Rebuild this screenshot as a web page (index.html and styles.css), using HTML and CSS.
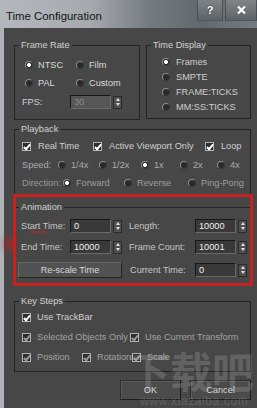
FILE: index.html
```html
<!DOCTYPE html>
<html lang="en">
    <head>
        <meta charset="UTF-8" />
        <meta name="viewport" content="width=device-width, initial-scale=1.0" />
        <title>Time Configuration</title>
        <link rel="stylesheet" href="styles.css">
    </head>
    <body>
        <div class="window">
            <div class="titlebar">
                <span class="title">Time Configuration</span>
                <div class="caption-btn help">?</div>
                <div class="caption-btn close">
                    <svg width="11" height="10" viewBox="0 0 11 10"><path d="M2 1.5 9 8.5M9 1.5 2 8.5" /></svg>
                </div>
            </div>

            <div class="client">
                <div class="top-row">
                    <fieldset class="group frame-rate">
                        <legend>Frame Rate</legend>
                        <div class="fr-body">
                            <div class="radio-grid">
                                <label class="opt"><i class="radio on"></i>NTSC</label>
                                <label class="opt"><i class="radio"></i>Film</label>
                                <label class="opt"><i class="radio"></i>PAL</label>
                                <label class="opt"><i class="radio"></i>Custom</label>
                            </div>
                            <div class="fps">
                                <span class="fps-lbl">FPS:</span>
                                <span class="spinner off"><span class="input">30</span><span class="spin"></span></span>
                            </div>
                        </div>
                    </fieldset>

                    <fieldset class="group time-display">
                        <legend>Time Display</legend>
                        <div class="td-body">
                            <label class="opt"><i class="radio on"></i>Frames</label>
                            <label class="opt"><i class="radio"></i>SMPTE</label>
                            <label class="opt"><i class="radio"></i>FRAME:TICKS</label>
                            <label class="opt"><i class="radio"></i>MM:SS:TICKS</label>
                        </div>
                    </fieldset>
                </div>

                <fieldset class="group playback">
                    <legend>Playback</legend>
                    <div class="pb-body">
                        <div class="pb-checks">
                            <label class="opt"><i class="chk"></i>Real Time</label>
                            <label class="opt"><i class="chk"></i>Active Viewport Only</label>
                            <label class="opt"><i class="chk"></i>Loop</label>
                        </div>
                        <div class="pb-speed">
                            <span>Speed:</span>
                            <label class="opt"><i class="radio"></i>1/4x</label>
                            <label class="opt"><i class="radio"></i>1/2x</label>
                            <label class="opt"><i class="radio on"></i>1x</label>
                            <label class="opt"><i class="radio"></i>2x</label>
                            <label class="opt"><i class="radio"></i>4x</label>
                        </div>
                        <div class="pb-dir">
                            <span>Direction:</span>
                            <label class="opt"><i class="radio on"></i>Forward</label>
                            <label class="opt"><i class="radio"></i>Reverse</label>
                            <label class="opt"><i class="radio"></i>Ping-Pong</label>
                        </div>
                    </div>
                </fieldset>

                <div class="highlight">
                    <fieldset class="group animation">
                        <legend>Animation</legend>
                        <div class="an-body">
                            <div class="an-row">
                                <span>Start Time:</span>
                                <span class="spinner"><span class="input">0</span><span class="spin"></span></span>
                                <span>Length:</span>
                                <span class="spinner"><span class="input">10000</span><span class="spin"></span></span>
                            </div>
                            <div class="an-row">
                                <span>End Time:</span>
                                <span class="spinner"><span class="input">10000</span><span class="spin"></span></span>
                                <span>Frame Count:</span>
                                <span class="spinner"><span class="input">10001</span><span class="spin"></span></span>
                            </div>
                            <div class="an-last">
                                <div class="btn rescale">Re-scale Time</div>
                                <span class="cur-lbl">Current Time:</span>
                                <span class="spinner"><span class="input">0</span><span class="spin"></span></span>
                            </div>
                        </div>
                    </fieldset>
                </div>

                <fieldset class="group key-steps">
                    <legend>Key Steps</legend>
                    <div class="ks-body">
                        <div class="ks-row">
                            <label class="opt"><i class="chk"></i>Use TrackBar</label>
                        </div>
                        <div class="ks-row dim sel">
                            <label class="opt"><i class="chk"></i>Selected Objects Only</label>
                            <label class="opt"><i class="chk"></i>Use Current Transform</label>
                        </div>
                        <div class="ks-row dim prs">
                            <label class="opt"><i class="chk"></i>Position</label>
                            <label class="opt"><i class="chk"></i>Rotation</label>
                            <label class="opt"><i class="chk"></i>Scale</label>
                        </div>
                    </div>
                </fieldset>

                <div class="buttons">
                    <div class="btn">OK</div>
                    <div class="btn">Cancel</div>
                </div>
            </div>

            <div class="smudge"></div>
            <div class="dash"></div>
            <div class="watermark">
                <div class="wm-big">下载吧</div>
                <div class="wm-url">www.xiazaiba.com</div>
            </div>
        </div>
    </body>
</html>
```

FILE: styles.css
```css
* {
    margin: 0;
    padding: 0;
    box-sizing: border-box;
}
body {
    width: 257px;
    height: 408px;
    overflow: hidden;
    background-color: #474747;
    font-family: "Liberation Sans", Arial, sans-serif;
    font-size: 9.2px;
    color: #cfcfcf;
}
.window {
    height: 408px;
    display: flex;
    flex-direction: column;
    position: relative;
}

/* title bar */
.titlebar {
    height: 28px;
    display: flex;
    align-items: flex-start;
    background: linear-gradient(90deg, #b4b8bc 0%, #a6aaae 35%, #767b80 58%, #63686d 78%, #767b80 100%);
}
.title {
    flex: 1;
    padding: 10px 0 0 6px;
    font-size: 11.4px;
    line-height: 12px;
    color: #141414;
}
.caption-btn {
    height: 21px;
    display: flex;
    align-items: center;
    justify-content: center;
    color: #fff;
    font-weight: bold;
    font-size: 11px;
    text-shadow: 0 0 2px #222;
    border: 1px solid rgba(60, 65, 70, 0.7);
    border-top: none;
    background: linear-gradient(#7f8489, #5e6368);
}
.help {
    width: 26px;
    margin-right: 2px;
}
.close {
    width: 32px;
}
.close svg path {
    stroke: #fff;
    stroke-width: 2.2;
    fill: none;
}

/* client area */
.client {
    flex: 1;
    border-left: 4px solid #aeb2b6;
    padding: 12px 6px 0 10px;
}
.group {
    border: 1px solid #242424;
    min-width: 0;
}
.group legend {
    margin-left: 4px;
    padding: 0 2px;
    line-height: 11px;
    color: #d2d2d2;
}
.opt {
    display: flex;
    align-items: center;
    gap: 5px;
    height: 14px;
    white-space: nowrap;
}

.radio {
    width: 8px;
    height: 8px;
    flex: none;
    border-radius: 50%;
    background: #2a2a2a;
    border: 1px solid;
    border-color: #8c8c8c #3a3a3a #3a3a3a #8c8c8c;
}
.radio.on {
    background: radial-gradient(circle, #fff 0 1.6px, #2a2a2a 2.3px);
}
.chk {
    width: 9px;
    height: 9px;
    flex: none;
    margin-right: 1px;
    border: 1px solid #b4b4b4;
    background: #2c2c2c;
    position: relative;
}
.chk::after {
    content: "";
    position: absolute;
    left: 2px;
    top: 0;
    width: 2px;
    height: 5px;
    border: solid #fff;
    border-width: 0 2px 2px 0;
    transform: rotate(40deg);
}

.spinner {
    display: flex;
    align-items: center;
    gap: 2px;
}
.input {
    width: 41px;
    height: 14px;
    line-height: 12px;
    padding-left: 3px;
    color: #f0f0f0;
    background: #393939;
    border: 1px solid;
    border-color: #181818 #6a6a6a #6a6a6a #181818;
}
.spin {
    width: 9px;
    height: 13px;
    background: #505050;
    border: 1px solid #2a2a2a;
    position: relative;
}
.spin::before,
.spin::after {
    content: "";
    position: absolute;
    left: 1.5px;
    border-left: 2.5px solid transparent;
    border-right: 2.5px solid transparent;
}
.spin::before {
    top: 1.5px;
    border-bottom: 3px solid #e0e0e0;
}
.spin::after {
    bottom: 1.5px;
    border-top: 3px solid #e0e0e0;
}
.spinner.off .input {
    background: #565656;
    color: #8c8c8c;
}

/* frame rate + time display */
.top-row {
    display: flex;
    align-items: flex-start;
    gap: 6px;
}
.frame-rate {
    width: 126px;
    height: 80px;
}
.fr-body {
    padding: 7px 0 0 7px;
}
.radio-grid {
    display: grid;
    grid-template-columns: 51px auto;
    row-gap: 4px;
    padding-left: 3px;
    color: #dadada;
}
.fps {
    display: flex;
    align-items: center;
    margin-top: 5px;
}
.fps-lbl {
    width: 48px;
}
.time-display {
    width: 105px;
    height: 79px;
}
.td-body {
    padding: 3px 0 0 15px;
}
.td-body .opt {
    height: 15px;
    gap: 6px;
}

/* playback */
.playback {
    margin-top: 4px;
    height: 73px;
}
.pb-body {
    padding: 4px 0 0 7px;
    display: flex;
    flex-direction: column;
    gap: 4.5px;
}
.pb-checks {
    display: grid;
    grid-template-columns: 71px 112px auto;
}
.pb-checks .opt {
    gap: 6px;
}
.pb-speed {
    display: grid;
    grid-template-columns: 36px 41px 42px 39px 37px auto;
    align-items: center;
    color: #ababab;
}
.pb-dir {
    display: grid;
    grid-template-columns: 41px 61px 64px auto;
    align-items: center;
    color: #9c9c9c;
}

/* animation, boxed in red */
.highlight {
    margin: -3px -2px 0 -1px;
    padding: 5px 0 5px;
    border: 3px solid #c81f1f;
}
.animation {
    border-width: 1px 0 0 0;
}
.animation legend {
    margin-left: 3px;
}
.an-body {
    padding: 6px 0 0 5px;
}
.an-row {
    display: grid;
    grid-template-columns: 49px 59px 66px auto;
    align-items: center;
    height: 14px;
    margin-bottom: 7px;
    color: #c6c6c6;
}
.an-last {
    display: flex;
    align-items: center;
    margin-top: 8px;
    color: #c6c6c6;
}
.btn {
    height: 20px;
    display: flex;
    align-items: center;
    justify-content: center;
    color: #d8d8d8;
    background: #4b4b4b;
    border: 1px solid;
    border-color: #2c2c2c #1e1e1e #1e1e1e #2c2c2c;
    box-shadow: inset 1px 1px 0 #5c5c5c;
}
.rescale {
    width: 104px;
    height: 16px;
    margin-left: -3px;
    background: #525252;
    border-color: #666 #252525 #252525 #666;
    box-shadow: none;
}
.cur-lbl {
    width: 65px;
    margin-left: 8px;
}

/* key steps */
.key-steps {
    margin-top: 10px;
    height: 76px;
}
.ks-body {
    padding: 3px 0 0 7px;
    display: flex;
    flex-direction: column;
    gap: 6px;
}
.ks-row {
    display: flex;
}
.ks-row .opt {
    gap: 5px;
}
.ks-row.dim {
    color: #a2a2a2;
}
.ks-row.dim .chk::after {
    border-color: #9a9a9a;
}
.sel .opt:first-child {
    width: 108px;
}
.prs .opt:nth-child(1) {
    width: 60px;
}
.prs .opt:nth-child(2) {
    width: 50px;
}

.buttons {
    display: flex;
    justify-content: flex-end;
    gap: 9px;
    margin-top: 8px;
}
.buttons .btn {
    width: 61px;
}

/* annotation marks and site watermark, laid over the dialog */
.smudge {
    position: absolute;
    left: 4px;
    top: 237px;
    width: 11px;
    height: 14px;
    border-radius: 50%;
    background: rgba(200, 30, 30, 0.6);
    filter: blur(3px);
}
.dash {
    position: absolute;
    left: 30px;
    top: 231px;
    width: 16px;
    height: 2px;
    background: rgba(210, 40, 40, 0.55);
    filter: blur(1px);
}
.watermark {
    position: absolute;
    left: 128px;
    top: 346px;
    width: 126px;
    color: rgba(215, 215, 215, 0.2);
    pointer-events: none;
}
.wm-big {
    font-family: "Noto Sans CJK SC", sans-serif;
    font-size: 42px;
    line-height: 48px;
    font-weight: bold;
}
.wm-url {
    margin-left: 12px;
    font-family: "Liberation Sans", Arial, sans-serif;
    font-size: 12px;
    letter-spacing: 0.6px;
    line-height: 14px;
}
```
